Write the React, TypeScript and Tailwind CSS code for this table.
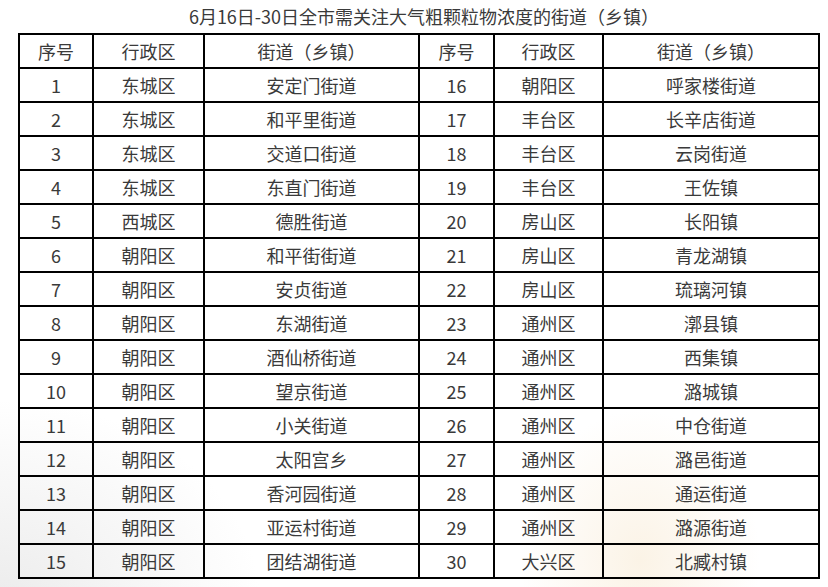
import React from "react";

const rows: [string, string, string][] = [
  ["1", "东城区", "安定门街道"],
  ["2", "东城区", "和平里街道"],
  ["3", "东城区", "交道口街道"],
  ["4", "东城区", "东直门街道"],
  ["5", "西城区", "德胜街道"],
  ["6", "朝阳区", "和平街街道"],
  ["7", "朝阳区", "安贞街道"],
  ["8", "朝阳区", "东湖街道"],
  ["9", "朝阳区", "酒仙桥街道"],
  ["10", "朝阳区", "望京街道"],
  ["11", "朝阳区", "小关街道"],
  ["12", "朝阳区", "太阳宫乡"],
  ["13", "朝阳区", "香河园街道"],
  ["14", "朝阳区", "亚运村街道"],
  ["15", "朝阳区", "团结湖街道"],
  ["16", "朝阳区", "呼家楼街道"],
  ["17", "丰台区", "长辛店街道"],
  ["18", "丰台区", "云岗街道"],
  ["19", "丰台区", "王佐镇"],
  ["20", "房山区", "长阳镇"],
  ["21", "房山区", "青龙湖镇"],
  ["22", "房山区", "琉璃河镇"],
  ["23", "通州区", "漷县镇"],
  ["24", "通州区", "西集镇"],
  ["25", "通州区", "潞城镇"],
  ["26", "通州区", "中仓街道"],
  ["27", "通州区", "潞邑街道"],
  ["28", "通州区", "通运街道"],
  ["29", "通州区", "潞源街道"],
  ["30", "大兴区", "北臧村镇"],
];

const cell = "border-2 border-black text-center align-middle p-0 h-[34px]";

export default function App() {
  const left = rows.slice(0, 15);
  const right = rows.slice(15);
  return (
    <div
      className="w-[828px] h-[587px] overflow-hidden text-[#3a3a3a] bg-white bg-[radial-gradient(ellipse_260px_200px_at_0px_600px,#ececec,transparent),radial-gradient(ellipse_120px_150px_at_640px_560px,#fbf3e6,transparent)]"
      style={{ fontFamily: '"Noto Sans CJK SC", "Noto Sans", sans-serif' }}
    >
      <div className="pl-[18px]">
        <div className="w-[800px] h-[33px] flex items-center justify-center pl-[12px] pb-[2px] text-[18px] leading-none">
          6月16日-30日全市需关注大气粗颗粒物浓度的街道（乡镇）
        </div>
        <table className="w-[800px] border-collapse table-fixed text-[18px] leading-none">
          <colgroup>
            <col className="w-[74px]" />
            <col className="w-[111px]" />
            <col className="w-[215px]" />
            <col className="w-[75px]" />
            <col className="w-[109px]" />
            <col className="w-[216px]" />
          </colgroup>
          <thead>
            <tr>
              <th className={`${cell} font-normal`}>序号</th>
              <th className={`${cell} font-normal`}>行政区</th>
              <th className={`${cell} font-normal`}>街道（乡镇）</th>
              <th className={`${cell} font-normal`}>序号</th>
              <th className={`${cell} font-normal`}>行政区</th>
              <th className={`${cell} font-normal`}>街道（乡镇）</th>
            </tr>
          </thead>
          <tbody>
            {left.map((l, i) => {
              const r = right[i];
              return (
                <tr key={i}>
                  <td className={cell}>{l[0]}</td>
                  <td className={cell}>{l[1]}</td>
                  <td className={cell}>{l[2]}</td>
                  <td className={cell}>{r[0]}</td>
                  <td className={cell}>{r[1]}</td>
                  <td className={cell}>{r[2]}</td>
                </tr>
              );
            })}
          </tbody>
        </table>
      </div>
    </div>
  );
}
